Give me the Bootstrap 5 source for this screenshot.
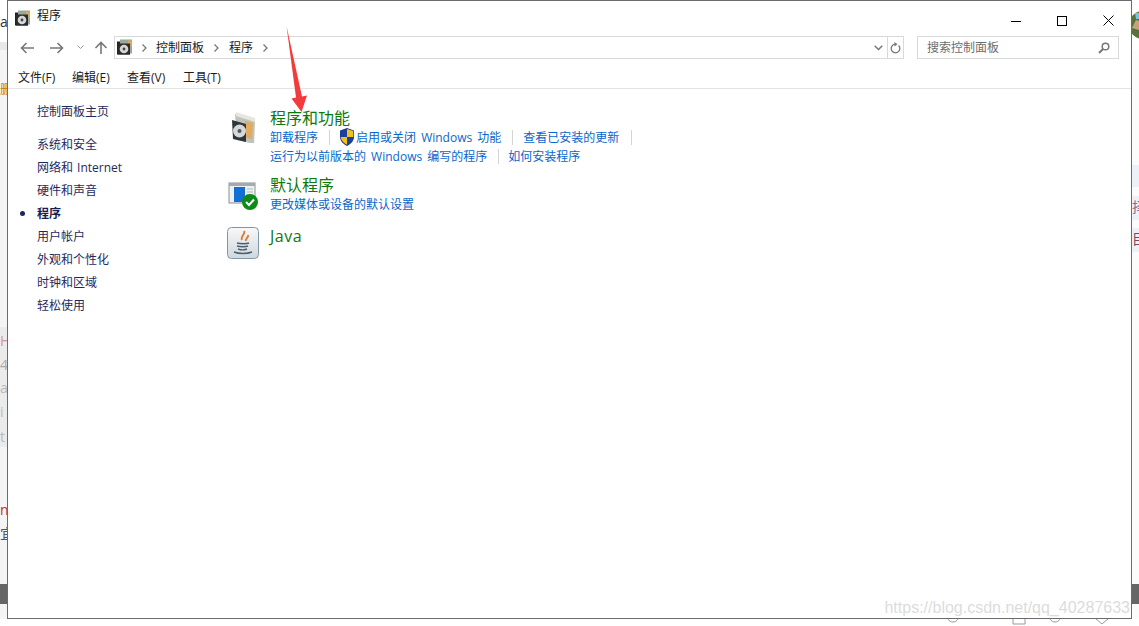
<!DOCTYPE html>
<html lang="zh-CN">
<head>
<meta charset="utf-8">
<title>程序</title>
<link rel="stylesheet" href="https://cdn.jsdelivr.net/npm/bootstrap@5.3.0/dist/css/bootstrap.min.css">
<style>
html,body{width:1139px;height:626px;overflow:hidden}
body{background:#fff;font-family:"Open Sans","Noto Sans CJK SC",sans-serif;font-size:12px;position:relative;color:#222}
.backdrop-strip{position:absolute;background:#f4f4f4}
.backdrop-text{position:absolute;left:0;font-size:14px;line-height:16px;white-space:nowrap}
.win{position:relative;margin-left:7px;width:1125px;height:619px;background:#fff;border:1px solid #6b6b6b}
.titlebar{height:29px;padding-left:7px;padding-top:5px;line-height:20px;color:#111}
.titlebar .ttl{margin-left:6px}
.capbtn{width:46px;height:29px}
.navrow{height:23px;padding-left:7px;margin-top:6px}
.navbtn{width:24px;height:23px}
.addr{height:23px;width:790px;border:1px solid #d9d9d9;margin-left:6px}
.crumb{color:#1a1a1a;line-height:20px}
.addr-end{width:16px;border-left:1px solid #d9d9d9;height:21px}
.searchbox{width:202px;height:23px;border:1px solid #d9d9d9;margin-left:13px;padding:0 8px 0 9px;color:#6d6d6d;line-height:20px}
.menurow{height:30px;padding-left:10px;padding-top:10px;border-bottom:1px solid #e3e3e3;line-height:18px;color:#1a1a1a}
.menurow span:nth-child(1){width:54px}
.menurow span:nth-child(2){width:55px}
.menurow span:nth-child(3){width:56px}
.body-wrap{padding-top:11px}
.side{width:215px;padding-left:29px;position:relative;color:#1f2a5c;line-height:23px;word-spacing:1px}
.side .home{margin-bottom:10px}
.side .cur{font-weight:700;position:relative;color:#16204e}
.side .cur::before{content:"";position:absolute;left:-17px;top:9px;width:5px;height:5px;border-radius:50%;background:#1c2660}
.main-col{padding-left:4px;padding-top:8px;line-height:19px}
.sect-icon{width:32px;height:32px;margin-right:11px;flex:none}
.sect-title{font-size:16px;line-height:19px;color:#0b7a0b}
.java-title{line-height:24px;letter-spacing:.5px}
.lnk{color:#0a66cc;text-decoration:none;line-height:19px;white-space:nowrap;word-spacing:2px}
.sepr{border-right:1px solid #d4d4d4;padding-right:11px;margin-right:10px;display:inline-block;line-height:15px}
.sepr-wide{padding-right:12px;margin-right:0}
.sepr-tight{margin-right:9px}
.link-line2{margin-top:1px}
.watermark{position:absolute;right:9px;top:597px;font-family:"Liberation Sans",sans-serif;font-size:16px;line-height:22px;color:#dcdcdc;white-space:nowrap}
.arrow{position:absolute;left:280px;top:20px}
.ghost{position:absolute;top:619px}
</style>
</head>
<body>
<!-- page behind the window -->
<div class="backdrop-strip" style="left:0;top:50px;width:7px;height:569px"></div>
<div class="backdrop-strip" style="left:1132px;top:50px;width:7px;height:569px;background:#fbfbfb"></div>
<div class="backdrop-strip" style="left:0;top:42px;width:7px;height:8px;background:#e9e9e9"></div>
<div class="backdrop-strip" style="left:0;top:327px;width:7px;height:120px;background:#ebebeb"></div>
<div class="backdrop-strip" style="left:0;top:584px;width:7px;height:20px;background:#666"></div>
<div class="backdrop-text" style="top:14px;color:#333">a</div>
<div class="backdrop-text" style="top:82px;color:#c87a20;font-size:12px">删</div>
<div class="backdrop-text" style="top:333px;color:#cf9a9a">H</div>
<div class="backdrop-text" style="top:357px;color:#aaa">4</div>
<div class="backdrop-text" style="top:380px;color:#bbb">a</div>
<div class="backdrop-text" style="top:404px;color:#bbb">i</div>
<div class="backdrop-text" style="top:429px;color:#bbb">t</div>
<div class="backdrop-text" style="top:502px;color:#b33">n</div>
<div class="backdrop-text" style="top:526px;color:#555">宜</div>
<div class="backdrop-strip" style="left:1132px;top:165px;width:7px;height:22px;background:#eef0f7"></div>
<div class="backdrop-strip" style="left:1132px;top:196px;width:7px;height:24px;background:#eef0f7"></div>
<div class="backdrop-strip" style="left:1132px;top:228px;width:7px;height:24px;background:#eef0f7"></div>
<div class="backdrop-text" style="left:1132px;top:199px;color:#8a6f8a">择</div>
<div class="backdrop-text" style="left:1132px;top:231px;color:#7a4a5a">目</div>
<div class="backdrop-strip" style="left:1132px;top:584px;width:7px;height:20px;background:#666"></div>
<svg class="position-absolute" style="left:1132px;top:10px" width="7" height="30"><rect width="7" height="30" fill="#fff"/><circle cx="11" cy="15" r="14" fill="#58703a"/><path d="M0 18l4-8 3 1v9z" fill="#c9a27c"/><path d="M3 3h4v6H4z" fill="#7fc2dc"/></svg>
<svg class="ghost" style="left:945px" width="170" height="7" fill="none" stroke="#9a9a9a"><path d="M3 0c2 4 8 4 10 0M105 0c2 4 8 4 10 0M151 0l6 5 6-5"/><path d="M68 0v5h12V0"/></svg>

<div class="win d-flex flex-column">
  <div class="titlebar d-flex justify-content-between">
    <div class="d-flex align-items-start">
      <svg width="16" height="17" viewBox="0 0 16 16" class="mt-1"><rect x="0" y="2" width="13" height="13" fill="#222"/><rect x="3" y="0" width="12" height="14" fill="#9aa89a"/><rect x="11" y="1" width="4" height="6" fill="#d8a860"/><rect x="1" y="4" width="12" height="11" fill="#2a2a2a"/><circle cx="7" cy="9.5" r="4.3" fill="#d5d5d5"/><circle cx="7" cy="9.5" r="1.4" fill="#444"/></svg>
      <span class="ttl">程序</span>
    </div>
    <div class="d-flex">
      <div class="capbtn d-flex align-items-center justify-content-center"><svg width="10" height="10"><path d="M0 5.5h10" stroke="#000"/></svg></div>
      <div class="capbtn d-flex align-items-center justify-content-center"><svg width="10" height="10"><rect x=".5" y=".5" width="9" height="9" fill="none" stroke="#000"/></svg></div>
      <div class="capbtn d-flex align-items-center justify-content-center"><svg width="11" height="11"><path d="M.5.5l10 10M10.5.5l-10 10" stroke="#000"/></svg></div>
    </div>
  </div>
  <div class="navrow d-flex align-items-center">
    <div class="navbtn d-flex align-items-center justify-content-center"><svg width="14" height="12" viewBox="0 0 14 12"><path d="M14 6H1.5M6.5 1L1.5 6l5 5" fill="none" stroke="#777" stroke-width="1.6"/></svg></div>
    <div class="navbtn d-flex align-items-center justify-content-center" style="margin-left:6px"><svg width="14" height="12" viewBox="0 0 14 12"><path d="M0 6h12.500M7.500 1l5 5-5 5" fill="none" stroke="#777" stroke-width="1.6"/></svg></div>
    <svg width="7" height="5" viewBox="0 0 7 5" style="margin-left:8px"><path d="M.5.5l3 3 3-3" fill="none" stroke="#999"/></svg>
    <svg width="14" height="13" viewBox="0 0 14 13" style="margin-left:10px"><path d="M7 13V1.500M1.500 7L7 1.500 12.500 7" fill="none" stroke="#777" stroke-width="1.6"/></svg>
    <div class="addr d-flex align-items-center">
      <svg width="16" height="17" viewBox="0 0 16 16" style="margin-left:2px"><rect x="0" y="2" width="13" height="13" fill="#222"/><rect x="3" y="0" width="12" height="14" fill="#9aa89a"/><rect x="11" y="1" width="4" height="6" fill="#d8a860"/><rect x="1" y="4" width="12" height="11" fill="#2a2a2a"/><circle cx="7" cy="9.5" r="4.300" fill="#d5d5d5"/><circle cx="7" cy="9.500" r="1.400" fill="#444"/></svg>
      <svg width="5" height="8" viewBox="0 0 5 8" style="margin:0 9px"><path d="M.5.5L4 4 .5 7.500" fill="none" stroke="#777" stroke-width="1.300"/></svg>
      <span class="crumb">控制面板</span>
      <svg width="5" height="8" viewBox="0 0 5 8" style="margin:0 10px"><path d="M.5.5L4 4 .5 7.500" fill="none" stroke="#777" stroke-width="1.300"/></svg>
      <span class="crumb">程序</span>
      <svg width="5" height="8" viewBox="0 0 5 8" style="margin-left:10px"><path d="M.5.5L4 4 .5 7.500" fill="none" stroke="#777" stroke-width="1.300"/></svg>
      <div class="ms-auto d-flex align-items-center">
        <svg width="9" height="6" viewBox="0 0 9 6" style="margin-right:4px"><path d="M.7.7l3.800 3.800L8.300.7" fill="none" stroke="#777" stroke-width="1.500"/></svg>
        <div class="addr-end d-flex align-items-center justify-content-center"><svg width="11" height="12" viewBox="0 0 11 12"><path d="M8.600 3.500a4.300 4.300 0 1 1-3-1.300" fill="none" stroke="#777" stroke-width="1.300"/><path d="M4.500 0l3 2.200-3 2.200z" fill="#777"/></svg></div>
      </div>
    </div>
    <div class="searchbox d-flex align-items-center justify-content-between">
      <span>搜索控制面板</span>
      <svg width="12" height="12" viewBox="0 0 12 12"><circle cx="7.500" cy="4.500" r="3.300" fill="none" stroke="#777" stroke-width="1.500"/><path d="M5 7l-4 4" stroke="#777" stroke-width="2"/></svg>
    </div>
  </div>
  <div class="menurow d-flex"><span>文件(F)</span><span>编辑(E)</span><span>查看(V)</span><span>工具(T)</span></div>
  <div class="body-wrap d-flex flex-grow-1">
    <div class="side">
      <div class="home">控制面板主页</div>
      <div>系统和安全</div>
      <div>网络和 Internet</div>
      <div>硬件和声音</div>
      <div class="cur">程序</div>
      <div>用户帐户</div>
      <div>外观和个性化</div>
      <div>时钟和区域</div>
      <div>轻松使用</div>
    </div>
    <div class="main-col flex-grow-1">
      <div class="d-flex" style="height:68px;padding-top:1px">
        <svg class="sect-icon" viewBox="0 0 32 32" style="margin-top:2px"><path d="M8 3l19 5 1 2-1 23-17-4z" fill="#bfc3ba"/><path d="M9 1l19 6v4L9 5z" fill="#e6e6de"/><path d="M18 10l8 2-1 16-7-2z" fill="#e0ab62"/><path d="M5 9l14 4v18L6 28z" fill="#2f3538"/><circle cx="12.500" cy="20" r="6.500" fill="#d6d8d8"/><circle cx="12.500" cy="20" r="2" fill="#50565a"/></svg>
        <div>
          <div class="sect-title">程序和功能</div>
          <div class="d-flex align-items-center">
            <a class="lnk sepr" href="#">卸载程序</a>
            <svg width="16" height="18" viewBox="0 0 16 18" style="margin-right:1px;margin-left:-1px"><path d="M8 0l7 2.500V9c0 4-3 7-7 9-4-2-7-5-7-9V2.500z" fill="#1b3f9a"/><path d="M8 1v8h6.300V3z" fill="#f3c21a"/><path d="M8 9H1.700c.4 3.500 3 6 6.300 7.800z" fill="#f3c21a"/></svg>
            <a class="lnk sepr" href="#">启用或关闭 Windows 功能</a>
            <a class="lnk sepr sepr-wide" href="#">查看已安装的更新</a>
          </div>
          <div class="link-line2">
            <a class="lnk sepr sepr-tight" href="#">运行为以前版本的 Windows 编写的程序</a><a class="lnk" href="#">如何安装程序</a>
          </div>
        </div>
      </div>
      <div class="d-flex" style="height:48px">
        <svg class="sect-icon" viewBox="0 0 32 32" style="margin-top:4px"><rect x="2" y="3" width="26" height="20" fill="#eef0f2" stroke="#8a8f94"/><rect x="2" y="3" width="26" height="3" fill="#a5aab0"/><rect x="7" y="7" width="11" height="15" fill="#1170d8"/><path d="M20 9h6M20 12h6M20 15h6" stroke="#b5b9bd"/><circle cx="23" cy="22" r="8" fill="#0d8a17"/><path d="M19 22l3 3 5-5.500" fill="none" stroke="#fff" stroke-width="2"/></svg>
        <div>
          <div class="sect-title">默认程序</div>
          <a class="lnk" href="#">更改媒体或设备的默认设置</a>
        </div>
      </div>
      <div class="d-flex">
        <svg class="sect-icon" viewBox="0 0 32 32" style="margin-top:3px"><defs><linearGradient id="jg" x1="0" y1="0" x2="0" y2="1"><stop offset="0" stop-color="#f7f8f9"/><stop offset="1" stop-color="#cfd8de"/></linearGradient></defs><rect x=".5" y=".5" width="31" height="31" rx="4" fill="url(#jg)" stroke="#7f98a8"/><path d="M17 4c2 3-4 5-2 9M21 8c1 3-3 3-2 6" fill="none" stroke="#e2762a" stroke-width="1.800"/><path d="M10 16c3 1 10 1 12 0M10 19c3 1 9 1 11 0M11 22c3 1 7 1 9 0M7 25c5 2 13 2 18 0" fill="none" stroke="#4a5f6e" stroke-width="1.400"/></svg>
        <div class="sect-title java-title">Java</div>
      </div>
    </div>
  </div>
</div>
<svg class="arrow" width="36" height="100" viewBox="0 0 36 100"><path d="M6.500 6L22 76.500l5-1L21.500 92 11.500 78.500l4.500-1z" fill="#f23c3c"/></svg>
<div class="watermark">https://blog.csdn.net/qq_40287633</div>
</body>
</html>
